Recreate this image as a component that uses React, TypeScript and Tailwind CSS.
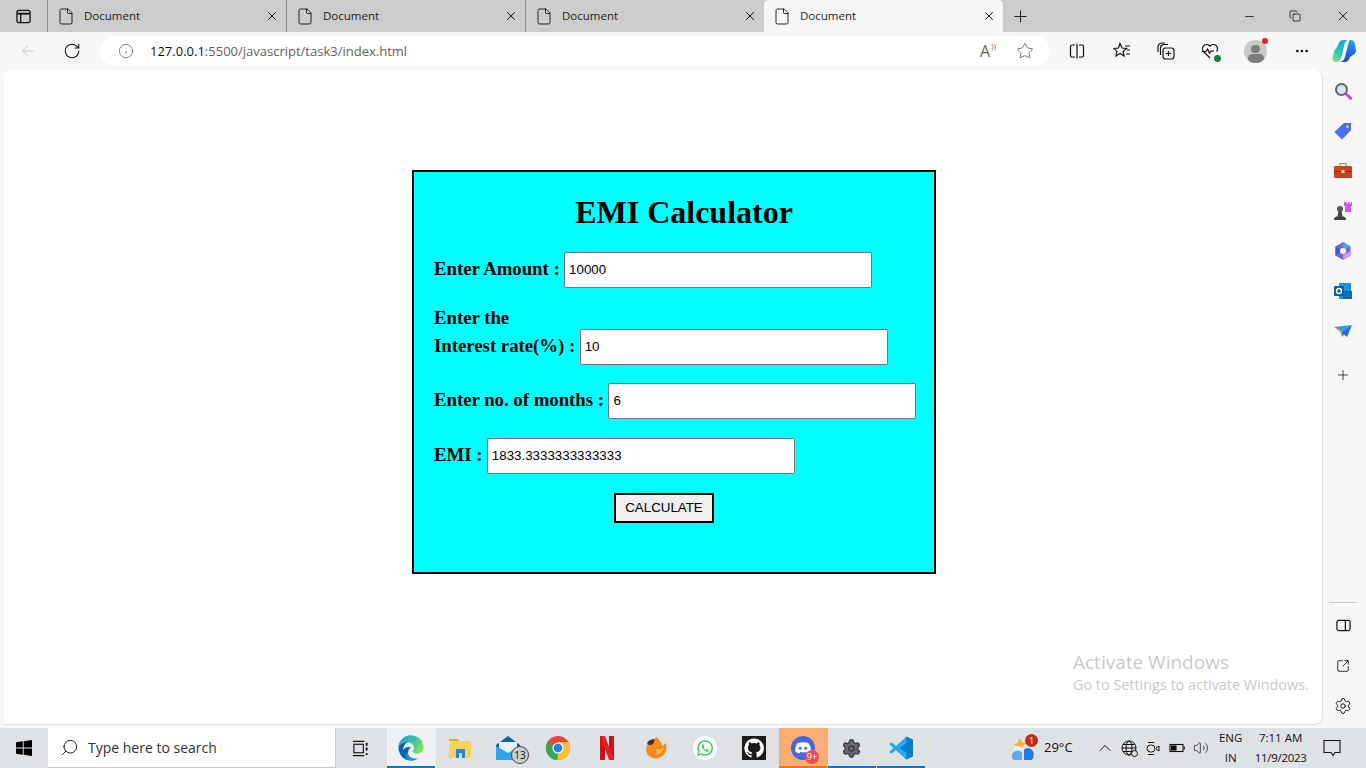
import type { ReactNode } from "react";
import {
  ArrowLeft,
  ChevronUp,
  Copy,
  File,
  Info,
  Minus,
  MoreHorizontal,
  Plus,
  RotateCw,
  Search,
  Settings,
  SquareArrowOutUpRight,
  Star,
  Volume2,
  X,
} from "lucide-react";

const uiFont = "font-['Open_Sans','Noto_Sans',sans-serif]";

const Tab = ({ active, divider }: { active?: boolean; divider?: boolean }) => (
  <div
    className={`relative flex items-center w-[239px] h-[32px] shrink-0 ${active ? "bg-[#f7f7f7] rounded-t-[5px]" : ""} ${divider ? "border-l border-[#8e8e8e]" : ""}`}
  >
    <File className="ml-[9px] w-[18px] h-[19px] text-[#111]" strokeWidth={1.2} />
    <span className="ml-[9px] text-[11.5px] text-[#222] flex-1">Document</span>
    <X className="mr-[7px] w-[14px] h-[14px] text-[#111]" strokeWidth={1.7} />
  </div>
);

const EdgeLogo = () => (
  <svg viewBox="0 0 26 26" className="w-[26px] h-[26px]">
    <defs>
      <linearGradient id="edgeA" x1="0" y1="0" x2="1" y2="0.600">
        <stop offset="0" stopColor="#1f9fd8" />
        <stop offset="0.600" stopColor="#38c7a0" />
        <stop offset="1" stopColor="#86dc5c" />
      </linearGradient>
    </defs>
    <path d="M13 .5C6 .5 1 6 .5 12c-.3 7 5 13.500 12 13.500 3 0 5.500-1 7-2-5 1-9.500-1-9.500-6 0-2.500 2-4.500 3-5-3-1.500-7 0-8 3 0-5 3-8 6-8.500z" fill="#0b63b8" />
    <path d="M.5 12C1.500 5 7 .5 13.500 .5c7 0 12 5.500 12 11.500 0 4-3 6.500-6.500 6.500-3 0-5-1.500-4.500-2.500 1.500-1 2-3 1-5C14.500 8 10.500 6.500 7 7.500 4 8.500 1.500 10 .5 12z" fill="url(#edgeA)" />
    <path d="M9.500 17c0 5 5 7.500 10 6.500-2 1.500-4.500 2.200-7 2-4.500-.500-6.500-5.500-3-8.500z" fill="#1c8fdc" />
  </svg>
);

const FolderIcon = () => (
  <svg viewBox="0 0 22 22" className="w-[22px] h-[22px]">
    <path d="M0 2h9l2 3H0z" fill="#e8a823" />
    <rect y="4" width="22" height="17" fill="#fbd25c" />
    <rect x="7" y="12" width="9" height="9" fill="#2b86cf" />
    <rect x="10" y="16" width="3" height="5" fill="#bfe0f7" />
  </svg>
);

const MailIcon = () => (
  <svg viewBox="0 0 26 24" className="w-[26px] h-[24px]">
    <path d="M0 9 12 0l12 9v15H0z" fill="#0c64b0" />
    <path d="M3 6h18v8l-9 5-9-5z" fill="#e9f3fb" />
    <path d="M0 10l12 7 12-7v14H0z" fill="#31a4ee" />
  </svg>
);

const ChromeIcon = () => (
  <svg viewBox="0 0 24 24" className="w-[24px] h-[24px]">
    <circle cx="12" cy="12" r="12" fill="#e8453c" />
    <path d="M12 12 1.600 6A12 12 0 0 0 12 24l6-10z" fill="#34a853" />
    <path d="M12 12l-0.500 12A12 12 0 0 0 22.400 6H12z" fill="#fbc02d" />
    <circle cx="12" cy="12" r="5.600" fill="#fff" />
    <circle cx="12" cy="12" r="4.400" fill="#2a7de1" />
  </svg>
);

const NetflixIcon = () => (
  <svg viewBox="0 0 14 24" className="w-[14px] h-[24px]">
    <path d="M0 0h5v24l-5 0z" fill="#c4161c" />
    <path d="M9 0h5v24H9z" fill="#c4161c" />
    <path d="M0 0h5l9 24H9z" fill="#ec1c24" />
  </svg>
);

const DuckIcon = () => (
  <svg viewBox="0 0 24 24" className="w-[24px] h-[24px]">
    <path d="M12 1c-1 3-6 3-8 6-2 4-3 9 1 13 5 4 13 3 16-3 2-4 2-8 0-10-1 2-2 3-3 3 0-3-3-7-6-9z" fill="#f58a1f" />
    <path d="M3 7c2-3 5-4 7-4 1 2 0 5-3 6-2 .500-3-.500-4-2z" fill="#4a3222" />
    <path d="M12 13c3 1 6 0 8-2-1 5-5 8-9 7 2-1 2-3 1-5z" fill="#fcc253" />
  </svg>
);

const WhatsappIcon = () => (
  <svg viewBox="0 0 24 24" className="w-[24px] h-[24px]">
    <circle cx="12" cy="12" r="12" fill="#fff" />
    <path d="M12 5a7 7 0 0 0-6 10.500L5 19l3.600-1A7 7 0 1 0 12 5z" fill="none" stroke="#3bd163" strokeWidth="1.500" />
    <path d="M9.500 8.500c-1 1-1 2.500.5 4.500s3.500 3 5 2.500c.800-.300 1-1.300.800-1.600l-1.800-.900-.800.900c-1-.400-2-1.400-2.500-2.500l.700-.800-.800-1.900c-.300-.300-1.200-.500-1.600-.200z" fill="#3bd163" />
  </svg>
);

const GithubIcon = () => (
  <svg viewBox="0 0 24 24" className="w-[24px] h-[24px]">
    <rect width="24" height="24" fill="#1b1b1b" />
    <path d="M12 2.500a9.700 9.700 0 0 0-3 18.900c.500.100.600-.200.600-.500v-1.700c-2.700.600-3.300-1.300-3.300-1.300-.400-1.100-1.100-1.400-1.100-1.400-.900-.600.100-.600.100-.600 1 .100 1.500 1 1.500 1 .900 1.500 2.300 1.100 2.900.800.100-.600.300-1.100.600-1.300-2.200-.300-4.400-1.100-4.400-4.800 0-1.100.400-1.900 1-2.600-.100-.200-.400-1.200.100-2.600 0 0 .800-.300 2.700 1a9.300 9.300 0 0 1 4.900 0c1.900-1.300 2.700-1 2.700-1 .500 1.400.200 2.400.100 2.600.600.700 1 1.500 1 2.600 0 3.700-2.300 4.500-4.500 4.800.400.300.700.900.700 1.800v2.700c0 .300.200.600.700.500A9.700 9.700 0 0 0 12 2.500z" fill="#fff" />
  </svg>
);

const DiscordIcon = () => (
  <svg viewBox="0 0 24 24" className="w-[24px] h-[24px]">
    <circle cx="12" cy="12" r="12" fill="#4a66dc" />
    <path d="M6 7.500c4-1.800 8-1.800 12 0 1.300 2.500 2 5 1.800 8-1.400 1-2.800 1.600-4 1.900l-.9-1.400c-2 .500-3.800.500-5.800 0l-.9 1.400c-1.200-.300-2.600-.900-4-1.900C4 12.500 4.700 10 6 7.500z" fill="#fff" />
    <circle cx="9.300" cy="12.300" r="1.500" fill="#4a66dc" />
    <circle cx="14.700" cy="12.300" r="1.500" fill="#4a66dc" />
  </svg>
);

const VsCodeIcon = () => (
  <svg viewBox="0 0 24 24" className="w-[24px] h-[24px]">
    <path d="M17.500.500 24 3.500v17l-6.500 3L7 14l4-3z" fill="#0a7cc8" />
    <path d="M17.500.500 7 10 2.500 6.500 0 8l4.500 4L0 16l2.500 1.500L7 14l10.500 9.500V17L11 12l6.500-5z" fill="#23a9f0" />
  </svg>
);

const WeatherIcon = () => (
  <svg viewBox="0 0 24 26" className="w-[24px] h-[26px]">
    <path d="M6 12 3 9l4-1 1-5 3 4 4 1-3 4z" fill="#f5b335" />
    <circle cx="7" cy="15" r="4" fill="#e7eef6" />
    <circle cx="16" cy="14" r="5" fill="#d9e6f3" />
    <path d="M1 21a5.500 5.500 0 0 1 10-3v7H4a3.500 3.500 0 0 1-3-4z" fill="#5ea9ea" />
    <path d="M13 14.500a6 6 0 0 1 9.500 6.500c0 2-1 4-3 4H13z" fill="#1f7fdc" />
  </svg>
);

const CopilotIcon = () => (
  <svg viewBox="0 0 24 24" className="w-[24px] h-[24px]">
    <defs>
      <linearGradient id="copA" x1="0.500" y1="0" x2="0.300" y2="1">
        <stop offset="0" stopColor="#18a5e0" />
        <stop offset="0.600" stopColor="#2bcbb2" />
        <stop offset="1" stopColor="#8ade70" />
      </linearGradient>
      <linearGradient id="copB" x1="0.600" y1="0" x2="0.400" y2="1">
        <stop offset="0" stopColor="#2ba0ee" />
        <stop offset="1" stopColor="#1f3fd0" />
      </linearGradient>
    </defs>
    <path d="M7 3.500C8 1.500 10 1 12 1h4c-2 .500-3 2-3.500 4l-3 13c-.500 3-3 5-6 5C1.500 23 0 21 .500 18.500L2 13c.500-2 2-3.500 3-5z" fill="url(#copA)" />
    <path d="M18.500 1c2.500 0 4 1.500 4.500 4l1 6c.300 2-1 4-3 5l-3 2c-.800 3-3 5-5.500 5H8c3-.500 4.500-2.500 5-5l3.500-14c.300-1.500 1-3 2-3z" fill="url(#copB)" />
  </svg>
);

const SideIcons = () => (
  <>
    <svg viewBox="0 0 18 18" className="w-[18px] h-[18px]">
      <circle cx="7.500" cy="7.500" r="5.500" fill="#cfe6f5" stroke="#666" strokeWidth="2" />
      <path d="M11.500 11.500 17 16.500" stroke="#c23ed8" strokeWidth="2.500" strokeLinecap="round" />
    </svg>
    <svg viewBox="0 0 18 18" className="w-[18px] h-[18px]">
      <path d="M10 1h7v7l-9 9.500L.500 10z" fill="#4a6cf0" />
      <circle cx="13.500" cy="4.500" r="1.500" fill="#f2c230" />
    </svg>
    <svg viewBox="0 0 18 18" className="w-[18px] h-[18px]">
      <path d="M6 4V1.500h6V4" fill="none" stroke="#8a8a8a" strokeWidth="1.200" />
      <rect y="4" width="18" height="12" rx="1" fill="#c8451a" />
      <rect y="9" width="18" height="1" fill="#8e2e0f" />
      <rect x="7.500" y="8" width="3" height="3" fill="#dcdcdc" />
    </svg>
    <svg viewBox="0 0 18 18" className="w-[18px] h-[18px]">
      <circle cx="6" cy="7" r="3" fill="#555" />
      <path d="M4.500 9h3l1 5h-5zM0 18c0-3 2-4 6-4s6 1 6 4z" fill="#444" />
      <path d="M11 0h1.500v1.500H14V0h1.500v1.500H17V0h1v4h-1v6h-6V4h-1V0z" fill="#c85af0" />
    </svg>
    <svg viewBox="0 0 18 18" className="w-[18px] h-[18px]">
      <path d="M9 0l7.500 4.500v9L9 18l-7.500-4.500v-9z" fill="#7b62d8" />
      <path d="M9 0l7.500 4.500L12 7 9 5.500z" fill="#3fa9e8" />
      <path d="M1.500 4.500 6 7v4l-4.500 2.500z" fill="#3b5bd0" />
      <path d="M9 18l7.500-4.500V9L12 11.500 9 13z" fill="#c9a0e8" />
      <circle cx="9" cy="9" r="3" fill="#fff" />
    </svg>
    <svg viewBox="0 0 18 18" className="w-[18px] h-[18px]">
      <rect x="5" y="1" width="12" height="16" fill="#1a95dd" />
      <path d="M9 9h9v8H9z" fill="#0f6db8" />
      <rect y="4" width="10" height="10" rx="1" fill="#0a5fa8" />
      <circle cx="5" cy="9" r="2.500" fill="none" stroke="#fff" strokeWidth="1.400" />
    </svg>
    <svg viewBox="0 0 18 18" className="w-[18px] h-[18px]">
      <path d="M0 5 18 3 7 9z" fill="#2f9ae8" />
      <path d="M18 3 7 9l1 6z" fill="#3f7fe0" />
      <path d="M18 3 13 15 8 11z" fill="#1f6fd0" />
      <path d="M0 5l7 4 1 6-2-5z" fill="#f5a623" />
    </svg>
  </>
);

const TaskItem = ({ children, state }: { children?: ReactNode; state?: "active" | "open" | "alert" }) => (
  <div
    className={`relative flex items-center justify-center w-[49px] h-[40px] pr-[2px] shrink-0 ${state === "active" ? "bg-[#eef0f2]" : ""} ${state === "alert" ? "bg-[#f9ad73]" : ""}`}
  >
    {children}
    {state && (
      <div className={`absolute bottom-0 left-0 right-[1px] h-[2px] ${state === "alert" ? "bg-[#f7720f]" : "bg-[#0078d4]"}`} />
    )}
  </div>
);

const FormRow = ({ label, value, className }: { label: string; value: string; className?: string }) => (
  <div className={`flex items-center ${className ?? ""}`}>
    <label className="mr-[4.4px] pb-[3px] whitespace-nowrap">{label}</label>
    <input
      readOnly
      value={value}
      className="w-[308px] h-[36px] bg-white border border-[#767676] rounded-[2px] pl-[4px] pb-[1px] text-[13.33px] font-['Liberation_Sans',sans-serif] font-normal text-black outline-none"
    />
  </div>
);

export default function App() {
  return (
    <div className={`relative flex flex-col h-screen w-[1366px] overflow-hidden bg-[#f7f7f7] ${uiFont}`}>
      {/* tab strip */}
      <div className="flex h-[32px] bg-[#cccccc] shrink-0">
        <div className="flex items-center justify-center w-[47px] shrink-0">
          <svg viewBox="0 0 16 16" className="w-[15px] h-[15px] text-[#111]" fill="none" stroke="currentColor" strokeWidth="1.400">
            <rect x="1" y="1.500" width="14" height="13" rx="2" />
            <path d="M1.500 5h13" strokeWidth="2" />
            <path d="M5 5v9" />
          </svg>
        </div>
        <Tab divider />
        <Tab divider />
        <Tab divider />
        <Tab active />
        <div className="flex items-center ml-[8px]">
          <Plus className="w-[19px] h-[19px] text-[#111]" strokeWidth={1.2} />
        </div>
        <div className="flex items-center ml-auto mr-[15px] text-[#111]">
          <Minus className="w-[13px] h-[13px]" strokeWidth={1.5} />
          <Copy className="ml-[33px] w-[12px] h-[12px]" strokeWidth={1.6} />
          <X className="ml-[34px] w-[16px] h-[16px]" strokeWidth={1.3} />
        </div>
      </div>

      {/* toolbar */}
      <div className="flex items-center h-[38px] shrink-0">
        <ArrowLeft className="ml-[19px] w-[18px] h-[18px] text-[#c4c4c4]" strokeWidth={1.2} />
        <RotateCw className="ml-[26px] w-[18px] h-[18px] text-[#111]" strokeWidth={1.4} />
        <div className="flex items-center ml-[19px] w-[950px] h-[30px] bg-white rounded-full">
          <Info className="ml-[18px] w-[16px] h-[16px] text-[#666]" strokeWidth={1.2} />
          <span className="ml-[16px] pt-[1px] text-[13px] text-[#5f5f5f]">
            <span className="text-[#111]">127.0.0.1</span>:5500/javascript/task3/index.html
          </span>
          <div className="ml-auto flex items-center">
            <span className="relative text-[16px] leading-none text-[#666]">
              A
              <span className="absolute -right-[6px] -top-[1px] text-[8px]">))</span>
            </span>
            <Star className="ml-[26px] mr-[16px] w-[18px] h-[18px] text-[#666]" strokeWidth={1.2} />
          </div>
        </div>
        <div className="flex items-center text-[#111]">
          <svg viewBox="0 0 16 16" className="ml-[19px] w-[16px] h-[16px]" fill="none" stroke="currentColor" strokeWidth="1.200">
            <path d="M6 2H3a1.500 1.500 0 0 0-1.500 1.500v9A1.500 1.500 0 0 0 3 14h3M10 2h3a1.500 1.500 0 0 1 1.500 1.500v9A1.500 1.500 0 0 1 13 14h-3M8 .5v15" />
          </svg>
          <svg viewBox="0 0 18 18" className="ml-[28px] w-[18px] h-[18px]" fill="none" stroke="currentColor" strokeWidth="1.200">
            <path d="M7 1.500 9 6l4.500.400-3.400 3 1 4.600L7 11.500 3 14l1-4.600-3-3L5.500 6zM12 4h5M14 8h3M13 12h4" />
          </svg>
          <svg viewBox="0 0 18 18" className="ml-[26px] w-[18px] h-[18px]" fill="none" stroke="currentColor" strokeWidth="1.200">
            <rect x="6" y="6" width="11" height="11" rx="2.500" />
            <path d="M11.500 9v5M9 11.500h5M3.500 13V6A3.500 3.500 0 0 1 7 2.500h4M1 10V5a4 4 0 0 1 4-4h3" />
          </svg>
          <div className="relative ml-[26px] w-[18px] h-[18px]">
            <svg viewBox="0 0 18 18" className="w-[18px] h-[18px]" fill="none" stroke="currentColor" strokeWidth="1.200">
              <path d="M9 16 2.500 9.500A4 4 0 0 1 9 4a4 4 0 0 1 6.500 5.500M1 9.500h4l1.500-2.500 2 4 1.500-2h3" />
            </svg>
            <div className="absolute right-[-2px] bottom-[-2px] w-[7px] h-[7px] rounded-full bg-[#14813a]" />
          </div>
          <div className="relative ml-[25px] w-[23px] h-[23px] rounded-full bg-[#c9c9c9] overflow-hidden flex flex-col items-center">
            <div className="mt-[5px] w-[9px] h-[9px] rounded-full bg-[#7d7d7d]" />
            <div className="mt-[1px] w-[16px] h-[10px] rounded-full bg-[#7d7d7d]" />
          </div>
          <div className="relative -ml-[5px] -mt-[20px] w-[6px] h-[6px] rounded-full bg-[#ee1c25]" />
          <MoreHorizontal className="ml-[26px] w-[16px] h-[16px]" strokeWidth={2} />
          <div className="ml-[22px]">
            <CopilotIcon />
          </div>
        </div>
      </div>

      {/* page + sidebar */}
      <div className="flex flex-1 min-h-0">
        <div className="ml-[4px] w-[1319px] h-[655px] bg-white rounded-t-[8px] rounded-br-[8px] border-r border-b border-[#e0e0e0] shrink-0">
          <div className="ml-[408px] mt-[100px] w-[524px] h-[404px] bg-[#00ffff] border-2 border-black pl-[20px] font-['Liberation_Serif',serif] font-bold text-[18.75px] leading-[28px] text-black">
            <h1 className="mt-[22px] text-[32px] leading-[37px] text-center w-[500px]">EMI Calculator</h1>
            <FormRow label="Enter Amount :" value="10000" className="mt-[21px]" />
            <div className="mt-[16px] h-[25px]">Enter the</div>
            <FormRow label="Interest rate(%) :" value="10" />
            <FormRow label="Enter no. of months :" value="6" className="mt-[18px]" />
            <FormRow label="EMI :" value="1833.3333333333333" className="mt-[19px]" />
            <button className="block mt-[19px] ml-[180px] w-[100px] h-[30px] bg-[#efefef] border-2 border-black text-[13.33px] leading-none font-['Liberation_Sans',sans-serif] font-normal">
              CALCULATE
            </button>
          </div>
        </div>
        <div className="flex flex-col items-center flex-1 h-[654px] pr-[3px] text-[#111]">
          <div className="flex flex-col items-center gap-[22px] mt-[12px]">
            <SideIcons />
          </div>
          <Plus className="mt-[27px] w-[16px] h-[16px]" strokeWidth={1.2} />
          <div className="mt-[219px] w-[28px] h-px bg-[#c8c8c8]" />
          <svg viewBox="0 0 16 16" className="mt-[15px] w-[15px] h-[15px]" fill="none" stroke="currentColor" strokeWidth="1.300">
            <rect x="1" y="2.500" width="14" height="11" rx="2" />
            <path d="M10 2.500v11" />
          </svg>
          <SquareArrowOutUpRight className="mt-[26px] w-[14px] h-[14px]" strokeWidth={1.5} />
          <Settings className="mt-[24px] w-[18px] h-[18px]" strokeWidth={1.3} />
        </div>
      </div>

      {/* taskbar */}
      <div className="flex items-center h-[40px] shrink-0 bg-[#dfe2e4] text-[#111]">
        <div className="flex items-center justify-center w-[48px] shrink-0">
          <svg viewBox="0 0 16 16" className="w-[16px] h-[16px]" fill="#000">
            <path d="M0 2.300 6.800 1.300v6.300H0zM7.700 1.200 16 0v7.600H7.700zM0 8.400h6.800v6.300L0 13.700zM7.700 8.400H16V16l-8.300-1.200z" />
          </svg>
        </div>
        <div className="flex items-center w-[288px] h-[40px] bg-white border-r border-b border-[#c9c9c9] shrink-0">
          <Search className="ml-[12px] w-[19px] h-[19px] -scale-x-100" strokeWidth={1.2} />
          <span className="ml-[9px] text-[14px] text-[#333]">Type here to search</span>
        </div>
        <div className="flex items-center justify-center w-[51px] pr-[2px] shrink-0">
          <svg viewBox="0 0 18 18" className="w-[17px] h-[17px]" fill="none" stroke="#111" strokeWidth="1.200">
            <rect x="2" y="4.500" width="10" height="9" />
            <path d="M1 1.500h12M1 16.500h12" />
            <path d="M15.500 3v3M15.500 8v3M15.500 14v2" strokeWidth="2" />
          </svg>
        </div>
        <TaskItem state="active"><EdgeLogo /></TaskItem>
        <TaskItem><FolderIcon /></TaskItem>
        <TaskItem>
          <MailIcon />
          <span className="absolute right-[5px] bottom-[4px] w-[18px] h-[18px] rounded-full bg-[#c9cdd0] border border-[#444] text-[10px] leading-[16px] text-center">13</span>
        </TaskItem>
        <TaskItem><ChromeIcon /></TaskItem>
        <TaskItem><NetflixIcon /></TaskItem>
        <TaskItem><DuckIcon /></TaskItem>
        <TaskItem><WhatsappIcon /></TaskItem>
        <TaskItem><GithubIcon /></TaskItem>
        <TaskItem state="alert">
          <DiscordIcon />
          <span className="absolute right-[9px] bottom-[4px] w-[14px] h-[14px] rounded-full bg-[#ee4b4f] text-white text-[9px] leading-[14px] text-center">9+</span>
        </TaskItem>
        <TaskItem state="open"><Settings className="w-[21px] h-[21px] text-[#3d3d3d] fill-[#6a6a6a]" strokeWidth={1.6} /></TaskItem>
        <TaskItem state="open"><VsCodeIcon /></TaskItem>

        <div className="relative ml-[85px] shrink-0">
          <WeatherIcon />
          <span className="absolute -right-[3px] -top-[1px] w-[13px] h-[13px] rounded-full bg-[#c4271b] text-white text-[9px] leading-[13px] text-center">1</span>
        </div>
        <span className="ml-[9px] text-[13px] whitespace-nowrap">29°C</span>
        <ChevronUp className="ml-[22px] w-[20px] h-[20px]" strokeWidth={1.2} />
        <div className="relative ml-[6px]">
          <svg viewBox="0 0 16 16" className="w-[16px] h-[16px]" fill="none" stroke="#111" strokeWidth="1">
            <circle cx="8" cy="8" r="7" />
            <ellipse cx="8" cy="8" rx="3" ry="7" />
            <path d="M1 8h14M2 4.500h12M2 11.500h12" />
          </svg>
          <div className="absolute -right-[1px] -bottom-[1px] w-[7px] h-[7px] rounded-full bg-[#dfe2e4] border border-[#111]" />
        </div>
        <svg viewBox="0 0 16 16" className="ml-[8px] w-[16px] h-[16px]" fill="none" stroke="#111" strokeWidth="1">
          <rect x="2" y="5" width="8" height="7" rx="3.500" />
          <path d="M11 8l3-2v5l-3-2M3 2.500h6M3 14.500h6" />
        </svg>
        <svg viewBox="0 0 16 16" className="ml-[8px] w-[16px] h-[16px]" fill="none" stroke="#111" strokeWidth="1.100">
          <rect x="1" y="4.500" width="13" height="7" />
          <rect x="2.500" y="6" width="4.500" height="4" fill="#111" />
          <path d="M15.300 6.500v3" />
        </svg>
        <Volume2 className="ml-[8px] w-[16px] h-[16px]" strokeWidth={1.1} />
        <div className="flex flex-col items-center ml-[7px] w-[30px] text-[11.5px] h-[40px] pt-[1px]">
          <span className="leading-[17px]">ENG</span>
          <span className="leading-[23px]">IN</span>
        </div>
        <div className="flex flex-col items-center ml-[3px] w-[64px] text-[11.5px]">
          <span className="leading-[19px]">7:11 AM</span>
          <span className="leading-[21px] tracking-[-0.3px]">11/9/2023</span>
        </div>
        <svg viewBox="0 0 18 18" className="ml-[10px] w-[18px] h-[18px]" fill="none" stroke="#111" strokeWidth="1.100">
          <path d="M1 1.500h16v12h-5l-2 3-2-3H1z" />
        </svg>
      </div>

      {/* windows watermark, sits over the page */}
      <div className="absolute left-[1073px] top-[650px] text-[#c9c9c9] pointer-events-none">
        <div className="text-[19px] leading-[25px]">Activate Windows</div>
        <div className="text-[14.4px] leading-[20px] whitespace-nowrap">Go to Settings to activate Windows.</div>
      </div>
    </div>
  );
}
